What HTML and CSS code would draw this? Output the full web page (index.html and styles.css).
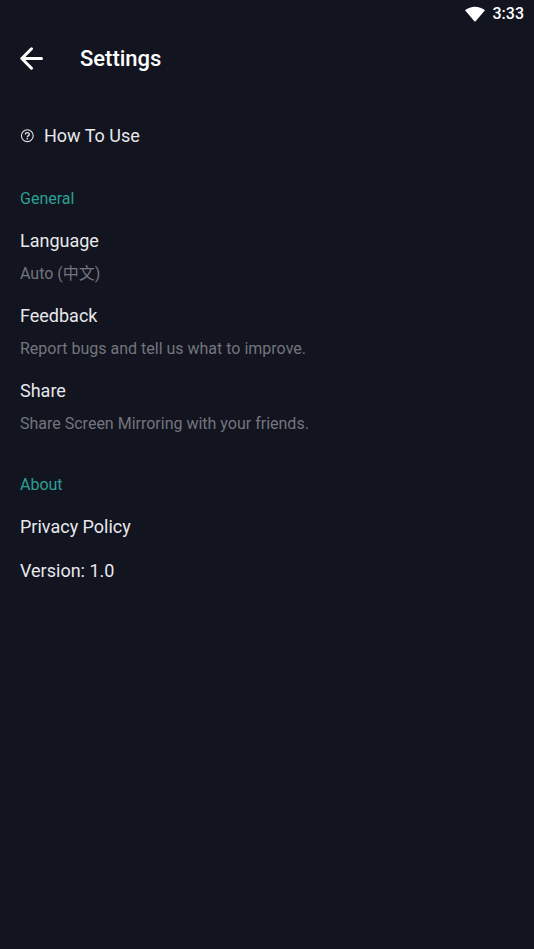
FILE: index.html
```html
<!DOCTYPE html>
<html lang="en">

<head>
    <meta charset="UTF-8">
    <meta name="viewport" content="width=device-width, initial-scale=1.0">
    <title>Settings</title>
    <link rel="stylesheet" href="styles.css">
</head>

<body>
    <div class="status">
        <svg class="wifi" viewBox="0 0 20 16" aria-hidden="true">
            <path d="M0 4.200Q4.500 0.700 10 0.700T20 4.200L10.600 15.200Q10 15.800 9.400 15.200Z" fill="#fff"/>
        </svg>
        <span>3:33</span>
    </div>
    <header class="head">
        <button class="back" type="button" aria-label="Back">
            <svg viewBox="0 0 24 24" aria-hidden="true">
                <path d="M21.500 11.500H2M11.500 1.800L1.800 11.500L11.500 21.200" fill="none" stroke="#fff" stroke-width="3" stroke-linecap="round" stroke-linejoin="round"/>
            </svg>
        </button>
        <h1>Settings</h1>
    </header>
    <main class="container">
        <a class="help" href="#">
            <svg viewBox="0 0 14 14" aria-hidden="true">
                <circle cx="7.300" cy="6.700" r="5.900" fill="none" stroke="#e4e4e8" stroke-width="1.100"/>
                <path d="M5.400 5.400C5.400 3 9.300 3 9.300 5.400C9.300 6.700 7.300 6.600 7.300 8.200M7.300 9.100V10.400" fill="none" stroke="#e4e4e8" stroke-width="1.300"/>
            </svg>
            How To Use
        </a>
        <h2>General</h2>
        <ul class="list">
            <li><a class="item" href="#">Language<small>Auto (中文)</small></a></li>
            <li><a class="item" href="#">Feedback<small>Report bugs and tell us what to improve.</small></a></li>
            <li><a class="item" href="#">Share<small>Share Screen Mirroring with your friends.</small></a></li>
        </ul>
        <h2>About</h2>
        <ul class="list">
            <li><a class="item" href="#">Privacy Policy</a></li>
            <li class="item">Version: 1.0</li>
        </ul>
    </main>
</body>

</html>
```

FILE: styles.css
```css
* {
    margin: 0;
    padding: 0;
    box-sizing: border-box;
    list-style: none;
}

body {
    min-height: 100vh;
    background: #121420;
    color: #e8e8ec;
    font-family: Roboto, "Noto Sans CJK SC", sans-serif;
    font-size: 18px;
    line-height: 24px;
}

a {
    color: inherit;
    text-decoration: none;
}

.status {
    display: flex;
    justify-content: flex-end;
    align-items: center;
    gap: 8px;
    height: 28px;
    padding: 0 10px;
    color: #fff;
    font-size: 16px;
    font-weight: 500;
}

.wifi {
    width: 20px;
    height: 16px;
}

.head {
    display: flex;
    align-items: center;
    gap: 36px;
    height: 62px;
    padding: 0 20px;
    color: #fff;
}

.back {
    width: 24px;
    height: 24px;
    border: 0;
    background: none;
    cursor: pointer;
}

.back svg {
    display: block;
}

.head h1 {
    font-size: 22px;
    font-weight: 500;
}

.container {
    padding: 34px 20px;
}

.help {
    display: flex;
    align-items: center;
    gap: 10px;
}

.help svg {
    width: 14px;
    height: 14px;
}

h2 {
    margin-top: 39px;
    color: #2ba092;
    font-size: 16px;
    font-weight: 400;
}

.list {
    display: flex;
    flex-direction: column;
    gap: 20px;
    margin-top: 18px;
}

.item {
    display: block;
}

.item small {
    display: block;
    margin-top: 11px;
    color: #74757c;
    font-size: 16px;
    line-height: 20px;
}
```
